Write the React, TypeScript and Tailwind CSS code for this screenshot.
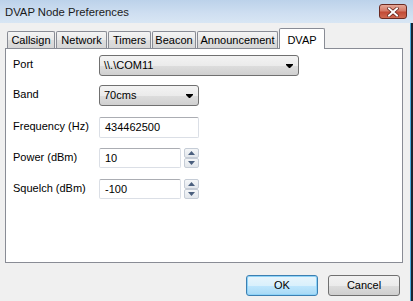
import React from "react";

const tabs = [
  { label: "Callsign", w: "w-[48px]" },
  { label: "Network", w: "w-[51px]" },
  { label: "Timers", w: "w-[43px]" },
  { label: "Beacon", w: "w-[44px]" },
  { label: "Announcement", w: "w-[81px]" },
];

const DropArrow = () => (
  <svg width="7" height="4" viewBox="0 0 7 4" className="shrink-0">
    <path d="M0 0h7v1L4 4H3L0 1z" fill="#000" />
  </svg>
);

const Combo = ({ value, w }: { value: string; w: string }) => (
  <div
    className={`${w} h-[21px] flex items-center justify-between pl-[4px] pr-[5px] rounded-[3px] border border-[#707070] bg-[linear-gradient(to_bottom,#f3f3f3_0%,#ebebeb_50%,#dddddd_51%,#d0d0d0_100%)]`}
  >
    <span>{value}</span>
    <DropArrow />
  </div>
);

const TextBox = ({ value, w, h = "h-[21px]" }: { value: string; w: string; h?: string }) => (
  <div
    className={`${w} ${h} flex items-center pl-[5px] bg-white border border-[#dbdfe6] border-t-[#abadb3] rounded-[2px]`}
  >
    {value}
  </div>
);

const SpinHalf = ({ up }: { up?: boolean }) => (
  <div className="h-[10px] w-[15px] flex items-center justify-center rounded-[2px] border border-[#c5ccd6] bg-[linear-gradient(to_bottom,#f4f6f8,#e3e7ec)]">
    <svg width="7" height="4" viewBox="0 0 7 4">
      <path d={up ? "M3.5 0L7 4H0z" : "M0 0h7L3.5 4z"} fill="#4a5f7e" />
    </svg>
  </div>
);

const Spin = ({ value }: { value: string }) => (
  <div className="flex items-center gap-[3px]">
    <TextBox value={value} w="w-[82px]" h="h-[20px]" />
    <div className="flex flex-col">
      <SpinHalf up />
      <SpinHalf />
    </div>
  </div>
);

const Row = ({ label, mt, children }: { label: string; mt: string; children: React.ReactNode }) => (
  <div className={`flex ${mt}`}>
    <div className="w-[86px] pt-[2px] leading-[14px]">{label}</div>
    {children}
  </div>
);

export default function App() {
  return (
    <div className="w-[413px] h-[301px] flex overflow-hidden font-['Liberation_Sans',Arial,sans-serif] text-[11px] text-black">
      <div className="w-[410px] flex flex-col bg-[#f0f0f0]">
        {/* title bar */}
        <div className="h-[23px] shrink-0 flex items-center justify-between pl-[5px] pr-[3px] bg-[linear-gradient(to_bottom,#bcd2ea,#cfdff1_60%,#d8e6f4)]">
          <span className="text-[11.3px] text-[#1a1a1a] pt-[1px]">DVAP Node Preferences</span>
          <div className="w-[28px] h-[15px] flex items-center justify-center rounded-[3px] border border-[#6b2a22] bg-[linear-gradient(to_bottom,#e5a798_0%,#d57a68_45%,#c24a36_55%,#d06a52_100%)]">
            <svg width="12" height="10" viewBox="0 0 12 10">
              <path d="M2 1.5L10 8.5M10 1.5L2 8.5" stroke="#5a1c16" strokeWidth="3.4" strokeLinecap="square" />
              <path d="M2 1.5L10 8.5M10 1.5L2 8.5" stroke="#fff" strokeWidth="2" strokeLinecap="square" />
            </svg>
          </div>
        </div>

        {/* body */}
        <div className="flex-1 flex flex-col pl-[5px] pr-[7px] pt-[5px]">
          <div className="h-[20px] flex items-end gap-px pl-[2px]">
            {tabs.map((t) => (
              <div
                key={t.label}
                className={`${t.w} h-[17px] flex items-center justify-center border border-b-0 border-[#898c95] rounded-t-[2px] bg-[linear-gradient(to_bottom,#f4f4f4,#e9e9e9_50%,#dedede_51%,#d6d6d6)]`}
              >
                {t.label}
              </div>
            ))}
            <div className="relative z-10 w-[46px] h-[21px] -mb-px flex items-start justify-center pt-[3px] border border-b-0 border-[#898c95] rounded-t-[2px] bg-white">
              DVAP
            </div>
          </div>

          <div className="h-[215px] bg-white border border-[#898c95] pl-[7px] pt-[6px]">
            <Row label="Port" mt="mt-0">
              <Combo value={"\\\\.\\COM11"} w="w-[200px]" />
            </Row>
            <Row label="Band" mt="mt-[9px]">
              <Combo value="70cms" w="w-[100px]" />
            </Row>
            <Row label="Frequency (Hz)" mt="mt-[11px]">
              <TextBox value="434462500" w="w-[100px]" />
            </Row>
            <Row label="Power (dBm)" mt="mt-[10px]">
              <Spin value="10" />
            </Row>
            <Row label="Squelch (dBm)" mt="mt-[11px]">
              <Spin value="-100" />
            </Row>
          </div>

          <div className="flex justify-end gap-[10px] mt-[12px] pr-[3px]">
            <div className="w-[72px] h-[21px] flex items-center justify-center rounded-[3px] border border-[#3c7fb1] bg-[linear-gradient(to_bottom,#e8f5fc_0%,#d9f0fc_50%,#bee6fd_51%,#a7d9f5_100%)] shadow-[inset_0_0_0_1px_#8ed3f8]">
              OK
            </div>
            <div className="w-[72px] h-[21px] flex items-center justify-center rounded-[3px] border border-[#707070] bg-[linear-gradient(to_bottom,#f2f2f2_0%,#ebebeb_50%,#dddddd_51%,#cfcfcf_100%)]">
              Cancel
            </div>
          </div>
        </div>
      </div>

      {/* window frame edge */}
      <div className="w-[3px] flex flex-col">
        <div className="h-[23px] bg-[linear-gradient(to_bottom,#bcd2ea,#d8e6f4)]" />
        <div className="flex-1 flex">
          <div className="w-[1px] bg-[#4aa8dc]" />
          <div className="flex-1 bg-[#1b2430]" />
        </div>
      </div>
    </div>
  );
}
